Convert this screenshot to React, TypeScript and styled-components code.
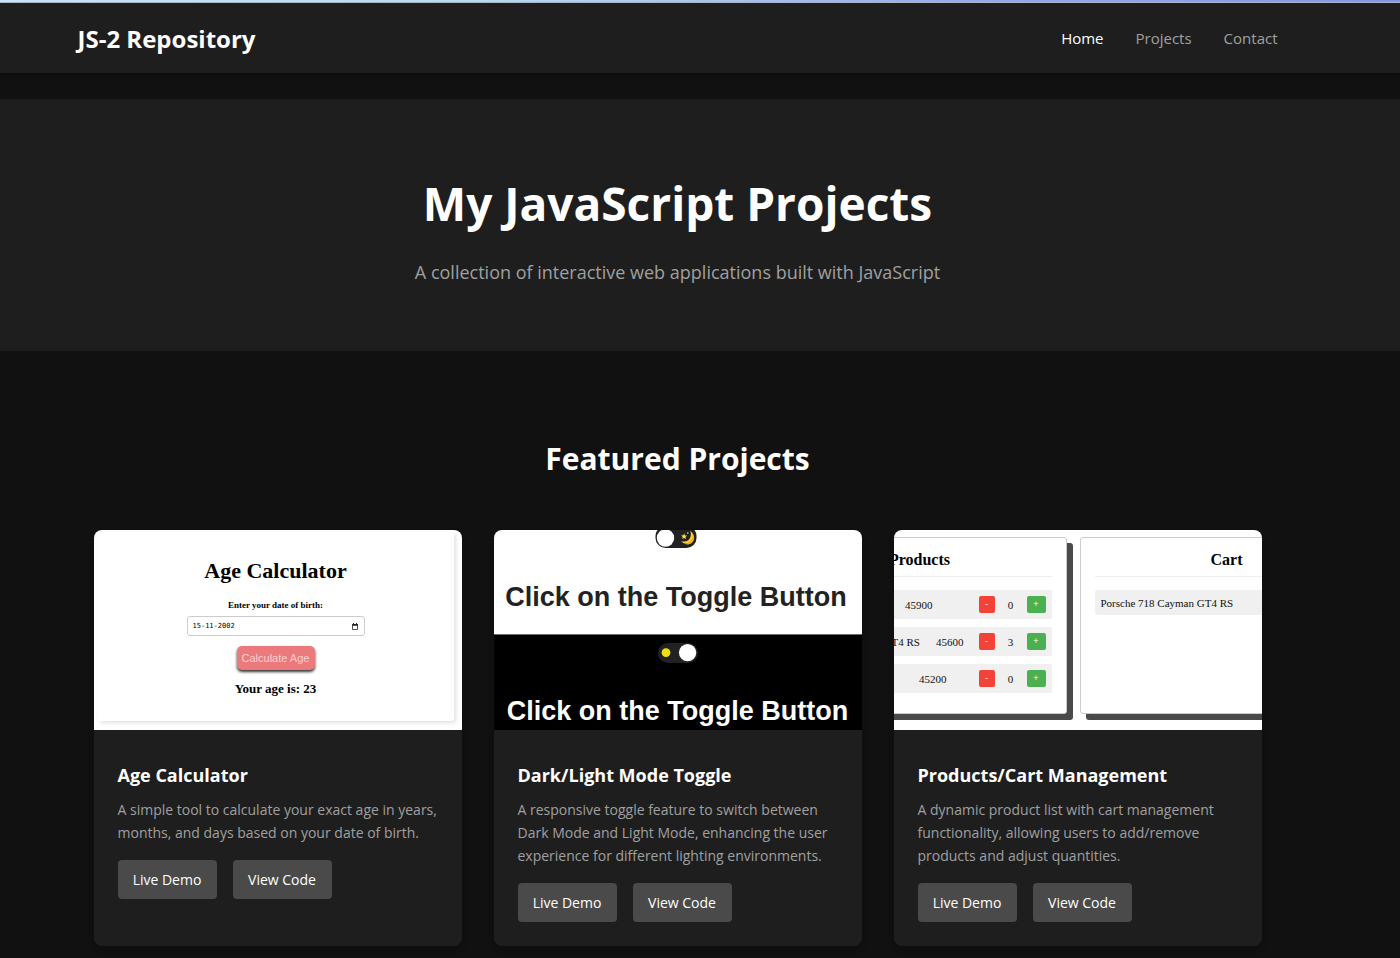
import React from "react";
import styled, { createGlobalStyle } from "styled-components";

const GlobalStyle = createGlobalStyle`
  * { box-sizing: border-box; }
  body {
    margin: 0;
    background: #111111;
    color: #ffffff;
    font-family: "Open Sans", "Noto Sans", sans-serif;
  }
  h1, h2, h3, p { margin: 0; }
`;

const Page = styled.div`
  min-height: 100vh;
  overflow: hidden;
`;

const TopStrip = styled.div`
  height: 3px;
  background: linear-gradient(90deg, #c9e6fb, #b5dcf3 35%, #9aa9ee 70%, #8b95ea);
  border-bottom: 1px solid #b3bccb;
`;

const Header = styled.header`
  background: #1e1e1e;
  padding-right: 45px;
  box-shadow: 0 2px 4px rgba(0, 0, 0, 0.3);
`;

const HeaderInner = styled.div`
  max-width: 1200px;
  height: 70px;
  margin: 0 auto;
  display: flex;
  align-items: center;
  justify-content: space-between;
`;

const Brand = styled.a`
  padding-top: 2px;
  font-size: 24px;
  line-height: 32px;
  font-weight: 700;
  color: #ffffff;
  text-decoration: none;
`;

const Nav = styled.nav`
  display: flex;
  gap: 32px;
`;

const NavLink = styled.a<{ $active?: boolean }>`
  font-size: 15px;
  line-height: 24px;
  color: ${(p) => (p.$active ? "#ffffff" : "#a0a0a0")};
  text-decoration: none;
`;

const Hero = styled.section`
  margin-top: 26px;
  height: 252px;
  padding: 65px 45px 0 0;
  background: #1e1e1e;
  text-align: center;
`;

const HeroTitle = styled.h1`
  font-size: 46px;
  line-height: 78px;
  font-weight: 700;
`;

const HeroText = styled.p`
  margin-top: 16px;
  font-size: 18px;
  line-height: 28px;
  color: #a0a0a0;
`;

const Featured = styled.section`
  padding: 82px 45px 12px 0;
`;

const SectionTitle = styled.h2`
  font-size: 30px;
  line-height: 52px;
  font-weight: 700;
  text-align: center;
`;

const Grid = styled.div`
  max-width: 1200px;
  margin: 45px auto 0;
  padding: 0 16px;
  display: grid;
  grid-template-columns: repeat(3, minmax(0, 1fr));
  gap: 32px;
`;

const Card = styled.article`
  border-radius: 8px;
  overflow: hidden;
  background: #1e1e1e;
  box-shadow: 0 4px 6px rgba(0, 0, 0, 0.2);
`;

const CardBody = styled.div`
  padding: 30px 24px 24px;
`;

const CardTitle = styled.h3`
  font-size: 18px;
  line-height: 31px;
  font-weight: 700;
`;

const CardText = styled.p`
  margin-top: 7px;
  font-size: 14px;
  line-height: 23px;
  color: #a0a0a0;
`;

const Actions = styled.div`
  margin-top: 16px;
  display: flex;
  gap: 16px;
`;

const ActionLink = styled.a`
  width: 99px;
  height: 39px;
  display: flex;
  align-items: center;
  justify-content: center;
  border-radius: 4px;
  background: #4a4a4a;
  color: #ffffff;
  font-size: 14px;
  text-decoration: none;
  white-space: nowrap;
`;

/* Preview: age calculator */

const AgePreview = styled.div`
  height: 200px;
  padding: 2px 8px 9px 4px;
  background: #ffffff;
  color: #000000;
  font-family: "Liberation Serif", serif;
`;

const AgePanel = styled.div`
  height: 100%;
  padding-top: 25px;
  display: flex;
  flex-direction: column;
  align-items: center;
  border-radius: 3px;
  box-shadow: 2px 2px 4px rgba(0, 0, 0, 0.12);
`;

const AgeTitle = styled.h3`
  font-size: 22px;
  line-height: 28px;
  font-weight: 700;
`;

const AgeLabel = styled.label`
  margin-top: 14px;
  font-size: 9px;
  line-height: 12px;
  font-weight: 700;
`;

const DateField = styled.div`
  width: 178px;
  height: 20px;
  margin-top: 5px;
  padding: 0 6px 0 5px;
  display: flex;
  align-items: center;
  border: 1px solid #cccccc;
  border-radius: 3px;
`;

const DateInput = styled.input`
  flex: 1;
  min-width: 0;
  padding: 0;
  border: 0;
  outline: 0;
  background: transparent;
  color: #000000;
  font-family: "DejaVu Sans Mono", monospace;
  font-size: 7px;
`;

const AgeButton = styled.button`
  width: 78px;
  height: 24px;
  margin-top: 10px;
  padding: 0;
  border: 0;
  border-radius: 5px;
  background: #ec7a7c;
  color: #fbd0cf;
  font-family: "Liberation Sans", sans-serif;
  font-size: 11px;
  box-shadow: 0 2px 3px rgba(0, 0, 0, 0.8);
`;

const AgeResult = styled.p`
  margin-top: 11px;
  font-size: 13px;
  line-height: 16px;
  font-weight: 700;
`;

/* Preview: dark / light toggle */

const TogglePreview = styled.div`
  height: 200px;
  overflow: hidden;
  font-family: "Liberation Sans", sans-serif;
`;

const TogglePane = styled.div<{ $dark?: boolean }>`
  height: ${(p) => (p.$dark ? 95 : 105)}px;
  padding: ${(p) => (p.$dark ? "8px 0 0" : "0 3px 0 0")};
  display: flex;
  flex-direction: column;
  align-items: center;
  justify-content: ${(p) => (p.$dark ? "flex-start" : "flex-end")};
  background: ${(p) => (p.$dark ? "#000000" : "#ffffff")};
  color: ${(p) => (p.$dark ? "#ffffff" : "#222222")};
  border-bottom: ${(p) => (p.$dark ? "0" : "1px solid #6a6a6a")};
`;

const ToggleLabel = styled.label`
  display: grid;
  flex: none;
  width: 42px;
  height: 20px;

  > * {
    grid-area: 1 / 1;
  }

  input {
    appearance: none;
    width: 42px;
    height: 20px;
    margin: 0;
  }
`;

const ToggleText = styled.p<{ $dark?: boolean }>`
  margin-top: ${(p) => (p.$dark ? 32 : 33)}px;
  margin-bottom: ${(p) => (p.$dark ? 0 : 21)}px;
  font-size: 27px;
  line-height: 32px;
  font-weight: 700;
  white-space: nowrap;
`;

/* Preview: products and cart */

const ShopPreview = styled.div`
  height: 200px;
  padding: 7px 9px 0 0;
  display: flex;
  justify-content: center;
  gap: 13px;
  overflow: hidden;
  background: #ffffff;
  color: #111111;
  font-family: "Liberation Serif", serif;
`;

const ShopPanel = styled.div`
  flex: none;
  width: 294px;
  height: 177px;
  padding: 9px 14px 0;
  border: 1px solid #cccccc;
  border-radius: 3px;
  background: #ffffff;
  box-shadow: 6px 6px 0 #4a4a4a;
`;

const ShopTitle = styled.h3`
  height: 30px;
  border-bottom: 1px solid #eeeeee;
  font-size: 16px;
  line-height: 26px;
  font-weight: 700;
  text-align: center;
  color: #000000;
`;

const ShopRows = styled.div`
  margin-top: 13px;
  display: flex;
  flex-direction: column;
  gap: 8px;
`;

const ShopRow = styled.div<{ $plain?: boolean }>`
  height: ${(p) => (p.$plain ? 25 : 29)}px;
  padding: 0 6px;
  display: flex;
  align-items: center;
  justify-content: ${(p) => (p.$plain ? "flex-start" : "flex-end")};
  border-radius: 2px;
  background: #f0f0f0;
  font-size: 11px;
  white-space: nowrap;

  > * {
    flex: none;
  }
`;

const Price = styled.span<{ $after: number }>`
  margin-left: 16px;
  margin-right: ${(p) => p.$after}px;
`;

const Quantity = styled.span`
  width: 32px;
  text-align: center;
`;

const StepButton = styled.button<{ $add?: boolean }>`
  width: ${(p) => (p.$add ? 19 : 16)}px;
  height: 17px;
  padding: 0;
  border: 0;
  border-radius: 2px;
  background: ${(p) => (p.$add ? "#4caf50" : "#f44336")};
  color: #ffffff;
  font-family: "Liberation Sans", sans-serif;
  font-size: 9px;
  line-height: 17px;
`;

function CalendarIcon() {
  return (
    <svg width="6" height="7" viewBox="0 0 12 14" aria-hidden="true">
      <path d="M1 3h10v10H1z" fill="none" stroke="#222" strokeWidth="1.6" />
      <path d="M0.5 2h11v3.5H0.5zM2 0h2v3H2zM8 0h2v3H8z" fill="#222" />
    </svg>
  );
}

function LightSwitch() {
  return (
    <svg width="42" height="20" viewBox="0 0 42 20" aria-hidden="true">
      <rect x="0.5" y="-2" width="41" height="20" rx="10" fill="#222222" />
      <rect x="0.5" y="0" width="41" height="20" rx="10" fill="#222222" />
      <circle cx="10.5" cy="10" r="8.7" fill="#ffffff" />
      <path
        d="M35.2 2.7a7 7 0 1 1-9.3 10.2c3.8 1.2 7.2.3 8.8-2.5 1.5-2.6 1.4-5.3.5-7.7z"
        fill="#fcc92e"
      />
      <path
        d="M37.6 5.2c2 5.8-2.6 11-9.2 10.1 4.2 2.6 9.9.4 10.7-4.4.3-2.2-.3-4.3-1.5-5.7z"
        fill="#f0ab28"
      />
      <path
        d="M29.1 5.5l.9 1.9 2.1.2-1.6 1.4.5 2-1.9-1-1.8 1.1.4-2.1-1.5-1.4 2.1-.3z"
        fill="#ffd94a"
      />
      <circle cx="32.8" cy="5.1" r="0.8" fill="#ffd94a" />
    </svg>
  );
}

function DarkSwitch() {
  return (
    <svg width="42" height="20" viewBox="0 0 42 20" aria-hidden="true">
      <rect x="1" y="0" width="40" height="20" rx="10" fill="#222222" />
      <circle cx="9" cy="9.6" r="4.4" fill="#f2df13" />
      <circle cx="30.6" cy="9.6" r="8.7" fill="#ffffff" />
    </svg>
  );
}

function AgeCalculatorPreview() {
  return (
    <AgePreview>
      <AgePanel>
        <AgeTitle>Age Calculator</AgeTitle>
        <AgeLabel htmlFor="birth-date">Enter your date of birth:</AgeLabel>
        <DateField>
          <DateInput id="birth-date" defaultValue="15-11-2002" />
          <CalendarIcon />
        </DateField>
        <AgeButton type="button">Calculate Age</AgeButton>
        <AgeResult>Your age is: 23</AgeResult>
      </AgePanel>
    </AgePreview>
  );
}

function ModeTogglePreview() {
  return (
    <TogglePreview>
      <TogglePane>
        <ToggleLabel>
          <input type="checkbox" aria-label="Light mode" />
          <LightSwitch />
        </ToggleLabel>
        <ToggleText>Click on the Toggle Button</ToggleText>
      </TogglePane>
      <TogglePane $dark>
        <ToggleLabel>
          <input type="checkbox" aria-label="Dark mode" defaultChecked />
          <DarkSwitch />
        </ToggleLabel>
        <ToggleText $dark>Click on the Toggle Button</ToggleText>
      </TogglePane>
    </TogglePreview>
  );
}

const products = [
  { name: "", price: "45900", quantity: 0, after: 46 },
  { name: "Porsche 718 Cayman GT4 RS", price: "45600", quantity: 3, after: 15 },
  { name: "", price: "45200", quantity: 0, after: 32 },
];

function ProductsCartPreview() {
  return (
    <ShopPreview>
      <ShopPanel>
        <ShopTitle>Products</ShopTitle>
        <ShopRows>
          {products.map((item) => (
            <ShopRow key={item.price}>
              {item.name && <span>{item.name}</span>}
              <Price $after={item.after}>{item.price}</Price>
              <StepButton type="button">-</StepButton>
              <Quantity>{item.quantity}</Quantity>
              <StepButton type="button" $add>
                +
              </StepButton>
            </ShopRow>
          ))}
        </ShopRows>
      </ShopPanel>
      <ShopPanel>
        <ShopTitle>Cart</ShopTitle>
        <ShopRows>
          <ShopRow $plain>Porsche 718 Cayman GT4 RS</ShopRow>
        </ShopRows>
      </ShopPanel>
    </ShopPreview>
  );
}

const projects = [
  {
    title: "Age Calculator",
    text: "A simple tool to calculate your exact age in years, months, and days based on your date of birth.",
    Preview: AgeCalculatorPreview,
  },
  {
    title: "Dark/Light Mode Toggle",
    text: "A responsive toggle feature to switch between Dark Mode and Light Mode, enhancing the user experience for different lighting environments.",
    Preview: ModeTogglePreview,
  },
  {
    title: "Products/Cart Management",
    text: "A dynamic product list with cart management functionality, allowing users to add/remove products and adjust quantities.",
    Preview: ProductsCartPreview,
  },
];

export default function App() {
  return (
    <Page>
      <GlobalStyle />
      <TopStrip />
      <Header>
        <HeaderInner>
          <Brand href="#">JS-2 Repository</Brand>
          <Nav>
            <NavLink href="#" $active>
              Home
            </NavLink>
            <NavLink href="#projects">Projects</NavLink>
            <NavLink href="#contact">Contact</NavLink>
          </Nav>
        </HeaderInner>
      </Header>
      <main>
        <Hero>
          <HeroTitle>My JavaScript Projects</HeroTitle>
          <HeroText>
            A collection of interactive web applications built with JavaScript
          </HeroText>
        </Hero>
        <Featured id="projects">
          <SectionTitle>Featured Projects</SectionTitle>
          <Grid>
            {projects.map(({ title, text, Preview }) => (
              <Card key={title}>
                <Preview />
                <CardBody>
                  <CardTitle>{title}</CardTitle>
                  <CardText>{text}</CardText>
                  <Actions>
                    <ActionLink href="#demo">Live Demo</ActionLink>
                    <ActionLink href="#code">View Code</ActionLink>
                  </Actions>
                </CardBody>
              </Card>
            ))}
          </Grid>
        </Featured>
      </main>
    </Page>
  );
}
